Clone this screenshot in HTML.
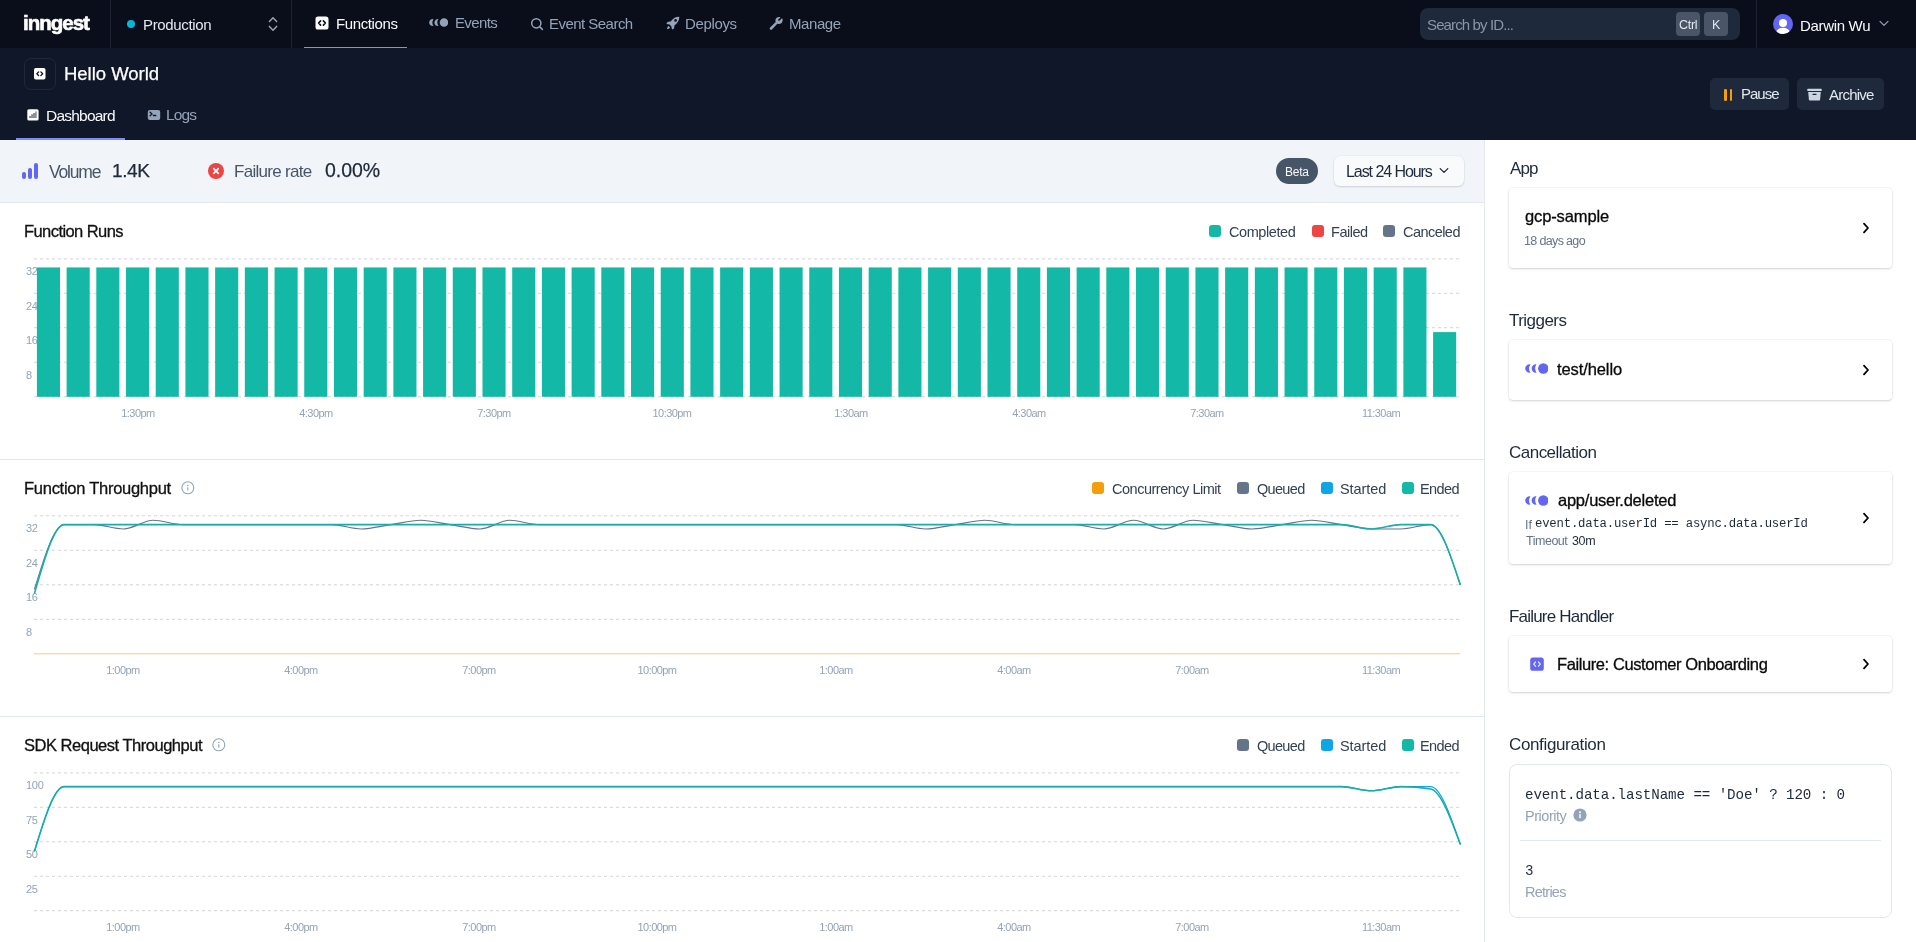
<!DOCTYPE html>
<html><head><meta charset="utf-8"><style>
*{box-sizing:border-box;margin:0;padding:0}
html,body{width:1916px;height:942px;overflow:hidden;background:#fff;font-family:"Liberation Sans",sans-serif}
.a{position:absolute;white-space:nowrap;line-height:1}
.t{will-change:transform}
</style></head><body>
<div class="a" style="left:0px;top:0px;width:1916px;height:48px;background:#0a0e1a;"></div>
<div class="a" style="left:110px;top:0px;width:1px;height:48px;background:#1c2433;"></div>
<div class="a" style="left:291px;top:0px;width:1px;height:48px;background:#1c2433;"></div>
<div class="a" style="left:1756px;top:0px;width:1px;height:48px;background:#1c2433;"></div>
<div id="logo" class="a t" style="left:23.00px;top:13.00px;font-size:20.5px;color:#fff;font-weight:700;letter-spacing:-1.000px;-webkit-text-stroke:0.6px #fff;">inngest</div>
<div class="a" style="left:127px;top:20px;width:8px;height:8px;background:#06b6d4;border-radius:50%"></div>
<div id="prod" class="a t" style="left:143.10px;top:17.00px;font-size:15px;color:#e2e8f0;font-weight:400;letter-spacing:-0.348px;">Production</div>
<svg class="a" style="left:266px;top:16px" width="14" height="16" viewBox="0 0 14 16"><path d="M3.4 5.5 L7 1.8 L10.6 5.5 M3.4 10.4 L7 14.3 L10.6 10.4" fill="none" stroke="#9ca3af" stroke-width="1.5" stroke-linecap="round" stroke-linejoin="round"/></svg>
<svg class="a" style="left:315px;top:16px" width="14" height="14" viewBox="0 0 14 14"><rect x="0.5" y="0.5" width="13" height="13" rx="2.6" fill="#fff"/><path d="M5.6 4.9 L3.6 7 L5.6 9.1 M8.4 4.9 L10.4 7 L8.4 9.1" fill="none" stroke="#0a0e1a" stroke-width="1.6" stroke-linecap="round" stroke-linejoin="round"/></svg>
<div id="func" class="a t" style="left:335.80px;top:16.00px;font-size:15px;color:#f8fafc;font-weight:400;letter-spacing:-0.394px;">Functions</div>
<div class="a" style="left:304px;top:47px;width:103px;height:2px;background:#818cf8;"></div>
<svg class="a" style="left:428.8px;top:17.5px" width="19.27" height="9.02" viewBox="0 0 19.27 9.02"><g transform="translate(15.006,4.510) scale(0.8200)"><path d="M-12.888,-4.076 A4.200,4.200 0 1 0 -12.888,4.076 A7.460,7.460 0 0 1 -12.888,-4.076 Z" fill="#94a3b8"/><path d="M-6.841,-4.148 A4.200,4.200 0 1 0 -6.841,4.148 A7.460,7.460 0 0 1 -6.841,-4.148 Z" fill="#94a3b8"/><circle cx="0" cy="0" r="5.2" fill="#94a3b8"/></g></svg>
<div id="events" class="a t" style="left:454.80px;top:15.15px;font-size:15px;color:#94a3b8;font-weight:400;letter-spacing:-0.640px;">Events</div>
<svg class="a" style="left:529px;top:16px" width="16" height="16" viewBox="0 0 16 16"><circle cx="7.3" cy="7.3" r="4.6" fill="none" stroke="#94a3b8" stroke-width="1.5"/><path d="M10.6 10.6 L13.4 13.4" stroke="#94a3b8" stroke-width="1.5" stroke-linecap="round"/></svg>
<div id="esearch" class="a t" style="left:549.20px;top:15.65px;font-size:15px;color:#94a3b8;font-weight:400;letter-spacing:-0.533px;">Event Search</div>
<svg class="a" style="left:666px;top:16px" width="14" height="14" viewBox="0 0 14 14"><path d="M13.3 0.7 C9.6 0.6 6.6 2.6 4.6 5.6 L2.2 5.8 C1.8 5.8 1.5 6 1.3 6.3 L0.4 8 L3.6 8.6 L5.4 10.4 L6 13.6 L7.7 12.7 C8 12.5 8.2 12.2 8.2 11.8 L8.4 9.4 C11.4 7.4 13.4 4.4 13.3 0.7 Z M2.6 9.9 C1.6 10.4 1.1 11.9 1 13 C2.1 12.9 3.6 12.4 4.1 11.4 Z" fill="#94a3b8"/><circle cx="9.6" cy="4.4" r="1.3" fill="#0a0e1a"/></svg>
<div id="deploys" class="a t" style="left:684.70px;top:16.35px;font-size:15px;color:#94a3b8;font-weight:400;letter-spacing:-0.351px;">Deploys</div>
<svg class="a" style="left:769px;top:16px" width="14" height="14" viewBox="0 0 14 14"><path d="M12.6 2.6 L10.4 4.8 L9.2 4.8 L9.2 3.6 L11.4 1.4 C9.4 0.5 7 1.6 6.5 3.8 C6.3 4.6 6.4 5.4 6.7 6.1 L1.1 11.5 C0.5 12.1 0.5 13 1.1 13.5 C1.6 14 2.5 14 3 13.4 L8.3 7.8 C10.9 8.9 13.8 7 13.7 4.1 C13.7 3.5 13.5 3 13.3 2.6 Z" fill="#94a3b8"/></svg>
<div id="manage" class="a t" style="left:788.60px;top:15.85px;font-size:15px;color:#94a3b8;font-weight:400;letter-spacing:-0.420px;">Manage</div>
<div class="a" style="left:1420px;top:8px;width:320px;height:32px;background:#1e293b;border-radius:8px"></div>
<div id="search" class="a t" style="left:1427.30px;top:17.05px;font-size:15px;color:#8b95a7;font-weight:400;letter-spacing:-0.874px;">Search by ID...</div>
<div class="a" style="left:1676px;top:12px;width:24px;height:24px;background:#4a5568;border-radius:4px"></div>
<div id="ctrl" class="a t" style="left:1679.00px;top:19.00px;font-size:12.5px;color:#e2e8f0;font-weight:400;letter-spacing:-0.269px;">Ctrl</div>
<div class="a" style="left:1704px;top:12px;width:24px;height:24px;background:#4a5568;border-radius:4px"></div>
<div id="kkey" class="a t" style="left:1711.80px;top:19.00px;font-size:12.5px;color:#e2e8f0;font-weight:400;letter-spacing:0.000px;">K</div>
<svg class="a" style="left:1773px;top:14px" width="20" height="20" viewBox="0 0 20 20"><defs><clipPath id="av"><circle cx="10" cy="10" r="10"/></clipPath></defs><circle cx="10" cy="10" r="10" fill="#6366f1"/><circle cx="10" cy="9.1" r="4" fill="#fff"/><ellipse cx="10" cy="17.6" rx="6.5" ry="3.8" fill="#fff" clip-path="url(#av)"/></svg>
<div id="user" class="a t" style="left:1800.00px;top:17.60px;font-size:15px;color:#f8fafc;font-weight:400;letter-spacing:-0.319px;">Darwin Wu</div>
<svg class="a" style="left:1879px;top:20px" width="10" height="7" viewBox="0 0 10 7"><path d="M1 1.3 L5 5.3 L9 1.3" fill="none" stroke="#94a3b8" stroke-width="1.2" stroke-linecap="round" stroke-linejoin="round"/></svg>
<div class="a" style="left:0px;top:48px;width:1916px;height:92px;background:#0f1729;"></div>
<div class="a" style="left:24px;top:58px;width:32px;height:32px;background:transparent;border:1px solid #1e293b;border-radius:7px"></div>
<svg class="a" style="left:34px;top:68px" width="12" height="12" viewBox="0 0 12 12"><rect x="0" y="0" width="11.5" height="11.5" rx="1.8" fill="#fff"/><path d="M4.6 3.9 L2.9 5.75 L4.6 7.6 M6.9 3.9 L8.6 5.75 L6.9 7.6" fill="none" stroke="#0f1729" stroke-width="1.4" stroke-linecap="round" stroke-linejoin="round"/></svg>
<div id="title" class="a t" style="left:63.80px;top:64.75px;font-size:18.5px;color:#fff;font-weight:400;letter-spacing:-0.020px;-webkit-text-stroke:0.25px currentColor;">Hello World</div>
<svg class="a" style="left:27px;top:109px" width="12" height="12" viewBox="0 0 12 12"><rect x="0.3" y="0.2" width="11.3" height="11.4" rx="1.6" fill="#fff"/><path d="M2.1 9.1 L2.1 6.9 L4.1 6.9 L4.1 5.3 L6.1 5.3 L6.1 3.9 L8.2 3.9 L8.2 2.4 L9.7 2.4 L9.7 9.1 Z" fill="#8a8f9a"/></svg>
<div id="dash" class="a t" style="left:45.80px;top:108.35px;font-size:15.5px;color:#f8fafc;font-weight:400;letter-spacing:-0.775px;">Dashboard</div>
<div class="a" style="left:16px;top:138px;width:109px;height:2px;background:#818cf8;"></div>
<svg class="a" style="left:147px;top:109px" width="14" height="12" viewBox="0 0 14 12"><rect x="0.8" y="1" width="12.4" height="10" rx="2" fill="#94a3b8"/><path d="M3.1 3.2 L5 5 L3.1 6.8 M6.4 6.5 L8.8 6.5" fill="none" stroke="#0f1729" stroke-width="1.3" stroke-linecap="round" stroke-linejoin="round"/></svg>
<div id="logs" class="a t" style="left:166.40px;top:107.20px;font-size:15.5px;color:#94a3b8;font-weight:400;letter-spacing:-0.868px;">Logs</div>
<div class="a" style="left:1710px;top:78px;width:79px;height:32px;background:#1e293b;border-radius:5px"></div>
<div class="a" style="left:1724px;top:89.3px;width:2.6px;height:11.5px;background:#f59e0b;border-radius:1.3px"></div>
<div class="a" style="left:1729.8px;top:89.3px;width:2.6px;height:11.5px;background:#f59e0b;border-radius:1.3px"></div>
<div id="pause" class="a t" style="left:1741.00px;top:86.40px;font-size:15px;color:#e2e8f0;font-weight:400;letter-spacing:-1.000px;">Pause</div>
<div class="a" style="left:1797px;top:78px;width:87px;height:32px;background:#1e293b;border-radius:5px"></div>
<svg class="a" style="left:1807px;top:88px" width="15" height="13" viewBox="0 0 15 13"><rect x="0.3" y="0.8" width="14.4" height="2.2" rx="0.6" fill="#cbd5e1"/><path d="M1.2 3.9 L13.8 3.9 L13.1 11.5 C13 12.2 12.5 12.6 11.9 12.6 L3.1 12.6 C2.5 12.6 2 12.2 1.9 11.5 Z" fill="#cbd5e1"/><rect x="5.4" y="5.8" width="4.2" height="1.2" rx="0.4" fill="#1e293b"/></svg>
<div id="archive" class="a t" style="left:1829.00px;top:86.90px;font-size:15px;color:#e2e8f0;font-weight:400;letter-spacing:-0.765px;">Archive</div>
<div class="a" style="left:0px;top:140px;width:1484px;height:62px;background:#f1f4f9;"></div>
<div class="a" style="left:0px;top:202px;width:1484px;height:1px;background:#e2e8f0;"></div>
<div class="a" style="left:1484px;top:140px;width:1px;height:802px;background:#e2e8f0;"></div>
<div class="a" style="left:22px;top:171.5px;width:3.8px;height:7.5px;background:#6366f1;border-radius:1.9px"></div>
<div class="a" style="left:28.1px;top:167.5px;width:3.8px;height:11.5px;background:#6366f1;border-radius:1.9px"></div>
<div class="a" style="left:34.2px;top:163px;width:3.8px;height:16px;background:#6366f1;border-radius:1.9px"></div>
<div id="vol" class="a t" style="left:48.80px;top:163.50px;font-size:17.5px;color:#475569;font-weight:400;letter-spacing:-1.200px;">Volume</div>
<div id="volv" class="a t" style="left:111.90px;top:160.50px;font-size:19px;color:#1e293b;font-weight:400;letter-spacing:-0.398px;-webkit-text-stroke:0.25px currentColor;">1.4K</div>
<svg class="a" style="left:208px;top:163px" width="16" height="16" viewBox="0 0 16 16"><circle cx="8" cy="8" r="8" fill="#ef4444"/><path d="M5.7 5.7 L10.3 10.3 M10.3 5.7 L5.7 10.3" stroke="#fff" stroke-width="1.7" stroke-linecap="round"/></svg>
<div id="frate" class="a t" style="left:233.50px;top:163.05px;font-size:17px;color:#475569;font-weight:400;letter-spacing:-0.701px;">Failure rate</div>
<div id="fratev" class="a t" style="left:324.50px;top:161.00px;font-size:19.5px;color:#1e293b;font-weight:400;letter-spacing:-0.050px;-webkit-text-stroke:0.25px currentColor;">0.00%</div>
<div class="a" style="left:1276px;top:158px;width:42px;height:26px;background:#475569;border-radius:13px"></div>
<div id="beta" class="a t" style="left:1285.10px;top:165.70px;font-size:12px;color:#f8fafc;font-weight:400;letter-spacing:-0.269px;">Beta</div>
<div class="a" style="left:1334px;top:156px;width:130px;height:30px;background:#f8fafc;border-radius:6px;box-shadow:0 1px 2px rgba(0,0,0,.14),0 0 0 0.5px rgba(0,0,0,.04)"></div>
<div id="range" class="a t" style="left:1346.10px;top:163.90px;font-size:16px;color:#1e293b;font-weight:400;letter-spacing:-1.062px;">Last 24 Hours</div>
<svg class="a" style="left:1439px;top:167px" width="10" height="8" viewBox="0 0 10 8"><path d="M1.2 1.6 L5 5.4 L8.8 1.6" fill="none" stroke="#1e293b" stroke-width="1.3" stroke-linecap="round" stroke-linejoin="round"/></svg>
<div class="a" style="left:0px;top:459px;width:1484px;height:1px;background:#e2e8f0;"></div>
<div class="a" style="left:0px;top:716px;width:1484px;height:1px;background:#e2e8f0;"></div>
<div id="t1" class="a t" style="left:23.80px;top:223.00px;font-size:16.5px;color:#111111;font-weight:400;letter-spacing:-0.576px;-webkit-text-stroke:0.3px currentColor;">Function Runs</div>
<div id="t2" class="a t" style="left:23.80px;top:480.05px;font-size:16.5px;color:#111111;font-weight:400;letter-spacing:-0.266px;-webkit-text-stroke:0.3px currentColor;">Function Throughput</div>
<div id="t3" class="a t" style="left:23.70px;top:736.95px;font-size:16.5px;color:#111111;font-weight:400;letter-spacing:-0.483px;-webkit-text-stroke:0.3px currentColor;">SDK Request Throughput</div>
<svg class="a" style="left:181px;top:481px" width="14" height="14" viewBox="0 0 14 14"><circle cx="6.8" cy="6.8" r="6" fill="none" stroke="#94a3b8" stroke-width="1.1"/><circle cx="6.8" cy="4.5" r="0.75" fill="#94a3b8"/><path d="M6.8 6.3 L6.8 9.6" stroke="#94a3b8" stroke-width="1.1"/></svg>
<svg class="a" style="left:212px;top:738px" width="14" height="14" viewBox="0 0 14 14"><circle cx="6.8" cy="6.8" r="6" fill="none" stroke="#94a3b8" stroke-width="1.1"/><circle cx="6.8" cy="4.5" r="0.75" fill="#94a3b8"/><path d="M6.8 6.3 L6.8 9.6" stroke="#94a3b8" stroke-width="1.1"/></svg>
<svg class="a" style="left:0;top:0;will-change:transform;font-family:'Liberation Sans',sans-serif" width="1484" height="942" viewBox="0 0 1484 942"><line x1="34" y1="258.90" x2="1460" y2="258.90" stroke="#d4d4d4" stroke-dasharray="3 3"/><line x1="34" y1="293.30" x2="1460" y2="293.30" stroke="#d4d4d4" stroke-dasharray="3 3"/><line x1="34" y1="327.70" x2="1460" y2="327.70" stroke="#d4d4d4" stroke-dasharray="3 3"/><line x1="34" y1="362.20" x2="1460" y2="362.20" stroke="#d4d4d4" stroke-dasharray="3 3"/><line x1="34" y1="396.80" x2="1460" y2="396.80" stroke="#d4d4d4" stroke-dasharray="3 3"/><text x="26" y="275" font-size="11" fill="#94a3b8" letter-spacing="-0.3">32</text><text x="26" y="310" font-size="11" fill="#94a3b8" letter-spacing="-0.3">24</text><text x="26" y="344" font-size="11" fill="#94a3b8" letter-spacing="-0.3">16</text><text x="26" y="379" font-size="11" fill="#94a3b8" letter-spacing="-0.3">8</text><rect x="36.90" y="267.43" width="23.1" height="129.38" fill="#14b8a6"/><rect x="66.61" y="267.43" width="23.1" height="129.38" fill="#14b8a6"/><rect x="96.31" y="267.43" width="23.1" height="129.38" fill="#14b8a6"/><rect x="126.02" y="267.43" width="23.1" height="129.38" fill="#14b8a6"/><rect x="155.72" y="267.43" width="23.1" height="129.38" fill="#14b8a6"/><rect x="185.43" y="267.43" width="23.1" height="129.38" fill="#14b8a6"/><rect x="215.14" y="267.43" width="23.1" height="129.38" fill="#14b8a6"/><rect x="244.84" y="267.43" width="23.1" height="129.38" fill="#14b8a6"/><rect x="274.55" y="267.43" width="23.1" height="129.38" fill="#14b8a6"/><rect x="304.25" y="267.43" width="23.1" height="129.38" fill="#14b8a6"/><rect x="333.96" y="267.43" width="23.1" height="129.38" fill="#14b8a6"/><rect x="363.67" y="267.43" width="23.1" height="129.38" fill="#14b8a6"/><rect x="393.37" y="267.43" width="23.1" height="129.38" fill="#14b8a6"/><rect x="423.08" y="267.43" width="23.1" height="129.38" fill="#14b8a6"/><rect x="452.78" y="267.43" width="23.1" height="129.38" fill="#14b8a6"/><rect x="482.49" y="267.43" width="23.1" height="129.38" fill="#14b8a6"/><rect x="512.20" y="267.43" width="23.1" height="129.38" fill="#14b8a6"/><rect x="541.90" y="267.43" width="23.1" height="129.38" fill="#14b8a6"/><rect x="571.61" y="267.43" width="23.1" height="129.38" fill="#14b8a6"/><rect x="601.31" y="267.43" width="23.1" height="129.38" fill="#14b8a6"/><rect x="631.02" y="267.43" width="23.1" height="129.38" fill="#14b8a6"/><rect x="660.73" y="267.43" width="23.1" height="129.38" fill="#14b8a6"/><rect x="690.43" y="267.43" width="23.1" height="129.38" fill="#14b8a6"/><rect x="720.14" y="267.43" width="23.1" height="129.38" fill="#14b8a6"/><rect x="749.84" y="267.43" width="23.1" height="129.38" fill="#14b8a6"/><rect x="779.55" y="267.43" width="23.1" height="129.38" fill="#14b8a6"/><rect x="809.26" y="267.43" width="23.1" height="129.38" fill="#14b8a6"/><rect x="838.96" y="267.43" width="23.1" height="129.38" fill="#14b8a6"/><rect x="868.67" y="267.43" width="23.1" height="129.38" fill="#14b8a6"/><rect x="898.37" y="267.43" width="23.1" height="129.38" fill="#14b8a6"/><rect x="928.08" y="267.43" width="23.1" height="129.38" fill="#14b8a6"/><rect x="957.79" y="267.43" width="23.1" height="129.38" fill="#14b8a6"/><rect x="987.49" y="267.43" width="23.1" height="129.38" fill="#14b8a6"/><rect x="1017.20" y="267.43" width="23.1" height="129.38" fill="#14b8a6"/><rect x="1046.90" y="267.43" width="23.1" height="129.38" fill="#14b8a6"/><rect x="1076.61" y="267.43" width="23.1" height="129.38" fill="#14b8a6"/><rect x="1106.32" y="267.43" width="23.1" height="129.38" fill="#14b8a6"/><rect x="1136.02" y="267.43" width="23.1" height="129.38" fill="#14b8a6"/><rect x="1165.73" y="267.43" width="23.1" height="129.38" fill="#14b8a6"/><rect x="1195.43" y="267.43" width="23.1" height="129.38" fill="#14b8a6"/><rect x="1225.14" y="267.43" width="23.1" height="129.38" fill="#14b8a6"/><rect x="1254.85" y="267.43" width="23.1" height="129.38" fill="#14b8a6"/><rect x="1284.55" y="267.43" width="23.1" height="129.38" fill="#14b8a6"/><rect x="1314.26" y="267.43" width="23.1" height="129.38" fill="#14b8a6"/><rect x="1343.96" y="267.43" width="23.1" height="129.38" fill="#14b8a6"/><rect x="1373.67" y="267.43" width="23.1" height="129.38" fill="#14b8a6"/><rect x="1403.38" y="267.43" width="23.1" height="129.38" fill="#14b8a6"/><rect x="1433.08" y="332.11" width="23.1" height="64.69" fill="#14b8a6"/><text x="138" y="417" font-size="11" fill="#94a3b8" text-anchor="middle" letter-spacing="-0.55">1:30pm</text><text x="316" y="417" font-size="11" fill="#94a3b8" text-anchor="middle" letter-spacing="-0.55">4:30pm</text><text x="494" y="417" font-size="11" fill="#94a3b8" text-anchor="middle" letter-spacing="-0.55">7:30pm</text><text x="672" y="417" font-size="11" fill="#94a3b8" text-anchor="middle" letter-spacing="-0.55">10:30pm</text><text x="851" y="417" font-size="11" fill="#94a3b8" text-anchor="middle" letter-spacing="-0.55">1:30am</text><text x="1029" y="417" font-size="11" fill="#94a3b8" text-anchor="middle" letter-spacing="-0.55">4:30am</text><text x="1207" y="417" font-size="11" fill="#94a3b8" text-anchor="middle" letter-spacing="-0.55">7:30am</text><text x="1381" y="417" font-size="11" fill="#94a3b8" text-anchor="middle" letter-spacing="-0.55">11:30am</text><line x1="34" y1="515.80" x2="1460" y2="515.80" stroke="#d4d4d4" stroke-dasharray="3 3"/><line x1="34" y1="550.30" x2="1460" y2="550.30" stroke="#d4d4d4" stroke-dasharray="3 3"/><line x1="34" y1="584.80" x2="1460" y2="584.80" stroke="#d4d4d4" stroke-dasharray="3 3"/><line x1="34" y1="619.30" x2="1460" y2="619.30" stroke="#d4d4d4" stroke-dasharray="3 3"/><line x1="34" y1="653.8" x2="1460" y2="653.8" stroke="#f59e0b" stroke-width="1" opacity="0.55"/><text x="26" y="532" font-size="11" fill="#94a3b8" letter-spacing="-0.3">32</text><text x="26" y="567" font-size="11" fill="#94a3b8" letter-spacing="-0.3">24</text><text x="26" y="601" font-size="11" fill="#94a3b8" letter-spacing="-0.3">16</text><text x="26" y="636" font-size="11" fill="#94a3b8" letter-spacing="-0.3">8</text><path d="M34.40,589.31C44.30,556.97 54.21,524.62 64.11,524.62C74.01,524.62 83.91,524.62 93.82,524.62C103.72,524.62 113.62,528.94 123.52,528.94C133.43,528.94 143.33,520.31 153.23,520.31C163.13,520.31 173.04,524.62 182.94,524.62C192.84,524.62 202.75,524.62 212.65,524.62C222.55,524.62 232.45,524.62 242.36,524.62C252.26,524.62 262.16,524.62 272.06,524.62C281.97,524.62 291.87,524.62 301.77,524.62C311.67,524.62 321.58,524.62 331.48,524.62C341.38,524.62 351.29,528.94 361.19,528.94C371.09,528.94 380.99,526.06 390.90,524.62C400.80,523.19 410.70,520.31 420.60,520.31C430.51,520.31 440.41,523.19 450.31,524.62C460.21,526.06 470.12,528.94 480.02,528.94C489.92,528.94 499.83,520.31 509.73,520.31C519.63,520.31 529.53,524.62 539.44,524.62C549.34,524.62 559.24,524.62 569.14,524.62C579.05,524.62 588.95,524.62 598.85,524.62C608.75,524.62 618.66,524.62 628.56,524.62C638.46,524.62 648.37,524.62 658.27,524.62C668.17,524.62 678.07,524.62 687.98,524.62C697.88,524.62 707.78,524.62 717.68,524.62C727.59,524.62 737.49,524.62 747.39,524.62C757.29,524.62 767.20,524.62 777.10,524.62C787.00,524.62 796.91,524.62 806.81,524.62C816.71,524.62 826.61,524.62 836.52,524.62C846.42,524.62 856.32,524.62 866.22,524.62C876.13,524.62 886.03,524.62 895.93,524.62C905.83,524.62 915.74,528.94 925.64,528.94C935.54,528.94 945.45,526.06 955.35,524.62C965.25,523.19 975.15,520.31 985.06,520.31C994.96,520.31 1004.86,524.62 1014.76,524.62C1024.67,524.62 1034.57,524.62 1044.47,524.62C1054.37,524.62 1064.28,524.62 1074.18,524.62C1084.08,524.62 1093.99,528.94 1103.89,528.94C1113.79,528.94 1123.69,520.31 1133.60,520.31C1143.50,520.31 1153.40,528.94 1163.30,528.94C1173.21,528.94 1183.11,520.31 1193.01,520.31C1202.91,520.31 1212.82,523.19 1222.72,524.62C1232.62,526.06 1242.53,528.94 1252.43,528.94C1262.33,528.94 1272.23,526.06 1282.14,524.62C1292.04,523.19 1301.94,520.31 1311.84,520.31C1321.75,520.31 1331.65,523.19 1341.55,524.62C1351.45,526.06 1361.36,528.94 1371.26,528.94C1381.16,528.94 1391.07,528.94 1400.97,528.94C1410.87,528.94 1420.77,524.62 1430.68,524.62C1440.58,524.62 1450.48,554.81 1460.38,585.00" fill="none" stroke="#64748b" stroke-width="1.1"/><path d="M34.40,593.62C44.30,559.12 54.21,524.62 64.11,524.62C74.01,524.62 83.91,524.62 93.82,524.62C103.72,524.62 113.62,524.62 123.52,524.62C133.43,524.62 143.33,524.62 153.23,524.62C163.13,524.62 173.04,524.62 182.94,524.62C192.84,524.62 202.75,524.62 212.65,524.62C222.55,524.62 232.45,524.62 242.36,524.62C252.26,524.62 262.16,524.62 272.06,524.62C281.97,524.62 291.87,524.62 301.77,524.62C311.67,524.62 321.58,524.62 331.48,524.62C341.38,524.62 351.29,524.62 361.19,524.62C371.09,524.62 380.99,524.62 390.90,524.62C400.80,524.62 410.70,524.62 420.60,524.62C430.51,524.62 440.41,524.62 450.31,524.62C460.21,524.62 470.12,524.62 480.02,524.62C489.92,524.62 499.83,524.62 509.73,524.62C519.63,524.62 529.53,524.62 539.44,524.62C549.34,524.62 559.24,524.62 569.14,524.62C579.05,524.62 588.95,524.62 598.85,524.62C608.75,524.62 618.66,524.62 628.56,524.62C638.46,524.62 648.37,524.62 658.27,524.62C668.17,524.62 678.07,524.62 687.98,524.62C697.88,524.62 707.78,524.62 717.68,524.62C727.59,524.62 737.49,524.62 747.39,524.62C757.29,524.62 767.20,524.62 777.10,524.62C787.00,524.62 796.91,524.62 806.81,524.62C816.71,524.62 826.61,524.62 836.52,524.62C846.42,524.62 856.32,524.62 866.22,524.62C876.13,524.62 886.03,524.62 895.93,524.62C905.83,524.62 915.74,524.62 925.64,524.62C935.54,524.62 945.45,524.62 955.35,524.62C965.25,524.62 975.15,524.62 985.06,524.62C994.96,524.62 1004.86,524.62 1014.76,524.62C1024.67,524.62 1034.57,524.62 1044.47,524.62C1054.37,524.62 1064.28,524.62 1074.18,524.62C1084.08,524.62 1093.99,524.62 1103.89,524.62C1113.79,524.62 1123.69,524.62 1133.60,524.62C1143.50,524.62 1153.40,524.62 1163.30,524.62C1173.21,524.62 1183.11,524.62 1193.01,524.62C1202.91,524.62 1212.82,524.62 1222.72,524.62C1232.62,524.62 1242.53,524.62 1252.43,524.62C1262.33,524.62 1272.23,524.62 1282.14,524.62C1292.04,524.62 1301.94,524.62 1311.84,524.62C1321.75,524.62 1331.65,524.62 1341.55,524.62C1351.45,524.62 1361.36,528.94 1371.26,528.94C1381.16,528.94 1391.07,524.62 1400.97,524.62C1410.87,524.62 1420.77,524.62 1430.68,524.62C1440.58,524.62 1450.48,554.81 1460.38,585.00" fill="none" stroke="#17adab" stroke-width="1.6"/><text x="123" y="674" font-size="11" fill="#94a3b8" text-anchor="middle" letter-spacing="-0.55">1:00pm</text><text x="301" y="674" font-size="11" fill="#94a3b8" text-anchor="middle" letter-spacing="-0.55">4:00pm</text><text x="479" y="674" font-size="11" fill="#94a3b8" text-anchor="middle" letter-spacing="-0.55">7:00pm</text><text x="657" y="674" font-size="11" fill="#94a3b8" text-anchor="middle" letter-spacing="-0.55">10:00pm</text><text x="836" y="674" font-size="11" fill="#94a3b8" text-anchor="middle" letter-spacing="-0.55">1:00am</text><text x="1014" y="674" font-size="11" fill="#94a3b8" text-anchor="middle" letter-spacing="-0.55">4:00am</text><text x="1192" y="674" font-size="11" fill="#94a3b8" text-anchor="middle" letter-spacing="-0.55">7:00am</text><text x="1381" y="674" font-size="11" fill="#94a3b8" text-anchor="middle" letter-spacing="-0.55">11:30am</text><line x1="34" y1="772.90" x2="1460" y2="772.90" stroke="#d4d4d4" stroke-dasharray="3 3"/><line x1="34" y1="807.30" x2="1460" y2="807.30" stroke="#d4d4d4" stroke-dasharray="3 3"/><line x1="34" y1="841.80" x2="1460" y2="841.80" stroke="#d4d4d4" stroke-dasharray="3 3"/><line x1="34" y1="876.30" x2="1460" y2="876.30" stroke="#d4d4d4" stroke-dasharray="3 3"/><line x1="34" y1="910.70" x2="1460" y2="910.70" stroke="#d4d4d4" stroke-dasharray="3 3"/><text x="26" y="789" font-size="11" fill="#94a3b8" letter-spacing="-0.3">100</text><text x="26" y="824" font-size="11" fill="#94a3b8" letter-spacing="-0.3">75</text><text x="26" y="858" font-size="11" fill="#94a3b8" letter-spacing="-0.3">50</text><text x="26" y="893" font-size="11" fill="#94a3b8" letter-spacing="-0.3">25</text><path d="M34.40,851.40C44.30,819.00 54.21,786.59 64.11,786.59C74.01,786.59 83.91,786.59 93.82,786.59C103.72,786.59 113.62,786.59 123.52,786.59C133.43,786.59 143.33,786.59 153.23,786.59C163.13,786.59 173.04,786.59 182.94,786.59C192.84,786.59 202.75,786.59 212.65,786.59C222.55,786.59 232.45,786.59 242.36,786.59C252.26,786.59 262.16,786.59 272.06,786.59C281.97,786.59 291.87,786.59 301.77,786.59C311.67,786.59 321.58,786.59 331.48,786.59C341.38,786.59 351.29,786.59 361.19,786.59C371.09,786.59 380.99,786.59 390.90,786.59C400.80,786.59 410.70,786.59 420.60,786.59C430.51,786.59 440.41,786.59 450.31,786.59C460.21,786.59 470.12,786.59 480.02,786.59C489.92,786.59 499.83,786.59 509.73,786.59C519.63,786.59 529.53,786.59 539.44,786.59C549.34,786.59 559.24,786.59 569.14,786.59C579.05,786.59 588.95,786.59 598.85,786.59C608.75,786.59 618.66,786.59 628.56,786.59C638.46,786.59 648.37,786.59 658.27,786.59C668.17,786.59 678.07,786.59 687.98,786.59C697.88,786.59 707.78,786.59 717.68,786.59C727.59,786.59 737.49,786.59 747.39,786.59C757.29,786.59 767.20,786.59 777.10,786.59C787.00,786.59 796.91,786.59 806.81,786.59C816.71,786.59 826.61,786.59 836.52,786.59C846.42,786.59 856.32,786.59 866.22,786.59C876.13,786.59 886.03,786.59 895.93,786.59C905.83,786.59 915.74,786.59 925.64,786.59C935.54,786.59 945.45,786.59 955.35,786.59C965.25,786.59 975.15,786.59 985.06,786.59C994.96,786.59 1004.86,786.59 1014.76,786.59C1024.67,786.59 1034.57,786.59 1044.47,786.59C1054.37,786.59 1064.28,786.59 1074.18,786.59C1084.08,786.59 1093.99,786.59 1103.89,786.59C1113.79,786.59 1123.69,786.59 1133.60,786.59C1143.50,786.59 1153.40,786.59 1163.30,786.59C1173.21,786.59 1183.11,786.59 1193.01,786.59C1202.91,786.59 1212.82,786.59 1222.72,786.59C1232.62,786.59 1242.53,786.59 1252.43,786.59C1262.33,786.59 1272.23,786.59 1282.14,786.59C1292.04,786.59 1301.94,786.59 1311.84,786.59C1321.75,786.59 1331.65,786.59 1341.55,786.59C1351.45,786.59 1361.36,790.73 1371.26,790.73C1381.16,790.73 1391.07,786.59 1400.97,786.59C1410.87,786.59 1420.77,786.59 1430.68,786.59C1440.58,786.59 1450.48,815.55 1460.38,844.51" fill="none" stroke="#0ea5e9" stroke-width="1.1"/><path d="M34.40,851.40C44.30,819.00 54.21,786.59 64.11,786.59C74.01,786.59 83.91,786.59 93.82,786.59C103.72,786.59 113.62,786.59 123.52,786.59C133.43,786.59 143.33,786.59 153.23,786.59C163.13,786.59 173.04,786.59 182.94,786.59C192.84,786.59 202.75,786.59 212.65,786.59C222.55,786.59 232.45,786.59 242.36,786.59C252.26,786.59 262.16,786.59 272.06,786.59C281.97,786.59 291.87,786.59 301.77,786.59C311.67,786.59 321.58,786.59 331.48,786.59C341.38,786.59 351.29,786.59 361.19,786.59C371.09,786.59 380.99,786.59 390.90,786.59C400.80,786.59 410.70,786.59 420.60,786.59C430.51,786.59 440.41,786.59 450.31,786.59C460.21,786.59 470.12,786.59 480.02,786.59C489.92,786.59 499.83,786.59 509.73,786.59C519.63,786.59 529.53,786.59 539.44,786.59C549.34,786.59 559.24,786.59 569.14,786.59C579.05,786.59 588.95,786.59 598.85,786.59C608.75,786.59 618.66,786.59 628.56,786.59C638.46,786.59 648.37,786.59 658.27,786.59C668.17,786.59 678.07,786.59 687.98,786.59C697.88,786.59 707.78,786.59 717.68,786.59C727.59,786.59 737.49,786.59 747.39,786.59C757.29,786.59 767.20,786.59 777.10,786.59C787.00,786.59 796.91,786.59 806.81,786.59C816.71,786.59 826.61,786.59 836.52,786.59C846.42,786.59 856.32,786.59 866.22,786.59C876.13,786.59 886.03,786.59 895.93,786.59C905.83,786.59 915.74,786.59 925.64,786.59C935.54,786.59 945.45,786.59 955.35,786.59C965.25,786.59 975.15,786.59 985.06,786.59C994.96,786.59 1004.86,786.59 1014.76,786.59C1024.67,786.59 1034.57,786.59 1044.47,786.59C1054.37,786.59 1064.28,786.59 1074.18,786.59C1084.08,786.59 1093.99,786.59 1103.89,786.59C1113.79,786.59 1123.69,786.59 1133.60,786.59C1143.50,786.59 1153.40,786.59 1163.30,786.59C1173.21,786.59 1183.11,786.59 1193.01,786.59C1202.91,786.59 1212.82,786.59 1222.72,786.59C1232.62,786.59 1242.53,786.59 1252.43,786.59C1262.33,786.59 1272.23,786.59 1282.14,786.59C1292.04,786.59 1301.94,786.59 1311.84,786.59C1321.75,786.59 1331.65,786.59 1341.55,786.59C1351.45,786.59 1361.36,790.73 1371.26,790.73C1381.16,790.73 1391.07,786.59 1400.97,786.59C1410.87,786.59 1420.77,787.37 1430.68,788.93C1440.58,790.50 1450.48,817.50 1460.38,844.51" fill="none" stroke="#17adab" stroke-width="1.6"/><text x="123" y="931" font-size="11" fill="#94a3b8" text-anchor="middle" letter-spacing="-0.55">1:00pm</text><text x="301" y="931" font-size="11" fill="#94a3b8" text-anchor="middle" letter-spacing="-0.55">4:00pm</text><text x="479" y="931" font-size="11" fill="#94a3b8" text-anchor="middle" letter-spacing="-0.55">7:00pm</text><text x="657" y="931" font-size="11" fill="#94a3b8" text-anchor="middle" letter-spacing="-0.55">10:00pm</text><text x="836" y="931" font-size="11" fill="#94a3b8" text-anchor="middle" letter-spacing="-0.55">1:00am</text><text x="1014" y="931" font-size="11" fill="#94a3b8" text-anchor="middle" letter-spacing="-0.55">4:00am</text><text x="1192" y="931" font-size="11" fill="#94a3b8" text-anchor="middle" letter-spacing="-0.55">7:00am</text><text x="1381" y="931" font-size="11" fill="#94a3b8" text-anchor="middle" letter-spacing="-0.55">11:30am</text></svg>
<div class="a" style="left:1209.2px;top:225px;width:11.799999999999955px;height:12px;background:#14b8a6;border-radius:3px"></div>
<div id="lg_c" class="a t" style="left:1229.20px;top:225.00px;font-size:14.5px;color:#334155;font-weight:400;letter-spacing:-0.425px;">Completed</div>
<div class="a" style="left:1312px;top:225px;width:12px;height:12px;background:#ef4444;border-radius:3px"></div>
<div id="lg_f" class="a t" style="left:1331.20px;top:225.30px;font-size:14.5px;color:#334155;font-weight:400;letter-spacing:-0.480px;">Failed</div>
<div class="a" style="left:1383px;top:225px;width:12px;height:12px;background:#64748b;border-radius:3px"></div>
<div id="lg_x" class="a t" style="left:1402.80px;top:225.30px;font-size:14.5px;color:#334155;font-weight:400;letter-spacing:-0.545px;">Canceled</div>
<div class="a" style="left:1092px;top:482px;width:12px;height:12px;background:#f59e0b;border-radius:3px"></div>
<div id="lg_cl" class="a t" style="left:1112.40px;top:482.00px;font-size:14.5px;color:#334155;font-weight:400;letter-spacing:-0.483px;">Concurrency Limit</div>
<div class="a" style="left:1237px;top:482px;width:12px;height:12px;background:#64748b;border-radius:3px"></div>
<div id="lg_q2" class="a t" style="left:1256.80px;top:482.00px;font-size:14.5px;color:#334155;font-weight:400;letter-spacing:-0.680px;">Queued</div>
<div class="a" style="left:1321px;top:482px;width:12px;height:12px;background:#0ea5e9;border-radius:3px"></div>
<div id="lg_s2" class="a t" style="left:1339.80px;top:481.65px;font-size:14.5px;color:#334155;font-weight:400;letter-spacing:-0.068px;">Started</div>
<div class="a" style="left:1402px;top:482px;width:12px;height:12px;background:#14b8a6;border-radius:3px"></div>
<div id="lg_e2" class="a t" style="left:1420.00px;top:481.65px;font-size:14.5px;color:#334155;font-weight:400;letter-spacing:-0.600px;">Ended</div>
<div class="a" style="left:1237px;top:739px;width:12px;height:12px;background:#64748b;border-radius:3px"></div>
<div id="lg_q3" class="a t" style="left:1256.80px;top:739.00px;font-size:14.5px;color:#334155;font-weight:400;letter-spacing:-0.680px;">Queued</div>
<div class="a" style="left:1321px;top:739px;width:12px;height:12px;background:#0ea5e9;border-radius:3px"></div>
<div id="lg_s3" class="a t" style="left:1339.80px;top:738.65px;font-size:14.5px;color:#334155;font-weight:400;letter-spacing:-0.068px;">Started</div>
<div class="a" style="left:1402px;top:739px;width:12px;height:12px;background:#14b8a6;border-radius:3px"></div>
<div id="lg_e3" class="a t" style="left:1420.00px;top:738.65px;font-size:14.5px;color:#334155;font-weight:400;letter-spacing:-0.600px;">Ended</div>
<div id="s_app" class="a t" style="left:1509.80px;top:160.30px;font-size:17px;color:#1e293b;font-weight:400;letter-spacing:-0.850px;">App</div>
<div class="a" style="left:1509px;top:188px;width:383px;height:80px;background:#fff;border-radius:4px;box-shadow:0 1px 3px rgba(0,0,0,.12),0 1px 2px -1px rgba(0,0,0,.12),0 0 0 0.5px rgba(0,0,0,.05)"></div>
<div id="s_gcp" class="a t" style="left:1525.00px;top:208.05px;font-size:16.5px;color:#0a0a0a;font-weight:400;letter-spacing:-0.126px;-webkit-text-stroke:0.3px currentColor;">gcp-sample</div>
<div id="s_ago" class="a t" style="left:1524.00px;top:235.40px;font-size:12.5px;color:#64748b;font-weight:400;letter-spacing:-0.650px;">18 days ago</div>
<svg class="a" style="left:1861px;top:222px" width="10" height="12" viewBox="0 0 10 12"><path d="M3 1.7 L7 6 L3 10.3" fill="none" stroke="#000" stroke-width="1.8" stroke-linecap="round" stroke-linejoin="round"/></svg>
<div id="s_trig" class="a t" style="left:1509.20px;top:311.75px;font-size:17px;color:#1e293b;font-weight:400;letter-spacing:-0.545px;">Triggers</div>
<div class="a" style="left:1509px;top:340px;width:383px;height:60px;background:#fff;border-radius:4px;box-shadow:0 1px 3px rgba(0,0,0,.12),0 1px 2px -1px rgba(0,0,0,.12),0 0 0 0.5px rgba(0,0,0,.05)"></div>
<svg class="a" style="left:1524.7px;top:362.5px" width="23.50" height="11.00" viewBox="0 0 23.50 11.00"><g transform="translate(18.300,5.500) scale(1.0000)"><path d="M-12.888,-4.076 A4.200,4.200 0 1 0 -12.888,4.076 A7.460,7.460 0 0 1 -12.888,-4.076 Z" fill="#6366f1"/><path d="M-6.841,-4.148 A4.200,4.200 0 1 0 -6.841,4.148 A7.460,7.460 0 0 1 -6.841,-4.148 Z" fill="#6366f1"/><circle cx="0" cy="0" r="5.2" fill="#6366f1"/></g></svg>
<div id="s_th" class="a t" style="left:1557.20px;top:360.95px;font-size:16.5px;color:#0a0a0a;font-weight:400;letter-spacing:-0.096px;-webkit-text-stroke:0.3px currentColor;">test/hello</div>
<svg class="a" style="left:1861px;top:364px" width="10" height="12" viewBox="0 0 10 12"><path d="M3 1.7 L7 6 L3 10.3" fill="none" stroke="#000" stroke-width="1.8" stroke-linecap="round" stroke-linejoin="round"/></svg>
<div id="s_canc" class="a t" style="left:1508.50px;top:443.90px;font-size:17px;color:#1e293b;font-weight:400;letter-spacing:-0.519px;">Cancellation</div>
<div class="a" style="left:1509px;top:472px;width:383px;height:92px;background:#fff;border-radius:4px;box-shadow:0 1px 3px rgba(0,0,0,.12),0 1px 2px -1px rgba(0,0,0,.12),0 0 0 0.5px rgba(0,0,0,.05)"></div>
<svg class="a" style="left:1524.7px;top:494.5px" width="23.50" height="11.00" viewBox="0 0 23.50 11.00"><g transform="translate(18.300,5.500) scale(1.0000)"><path d="M-12.888,-4.076 A4.200,4.200 0 1 0 -12.888,4.076 A7.460,7.460 0 0 1 -12.888,-4.076 Z" fill="#6366f1"/><path d="M-6.841,-4.148 A4.200,4.200 0 1 0 -6.841,4.148 A7.460,7.460 0 0 1 -6.841,-4.148 Z" fill="#6366f1"/><circle cx="0" cy="0" r="5.2" fill="#6366f1"/></g></svg>
<div id="s_aud" class="a t" style="left:1557.60px;top:491.70px;font-size:16.5px;color:#0a0a0a;font-weight:400;letter-spacing:-0.245px;-webkit-text-stroke:0.3px currentColor;">app/user.deleted</div>
<div id="s_if" class="a t" style="left:1524.50px;top:519.00px;font-size:12.5px;color:#64748b;font-weight:400;letter-spacing:0.000px;">If</div>
<div id="s_code1" class="a t" style="left:1535.40px;top:518.20px;font-size:12.3px;color:#1e293b;font-weight:400;letter-spacing:-0.203px;font-family:'Liberation Mono',monospace">event.data.userId == async.data.userId</div>
<div id="s_to" class="a t" style="left:1525.50px;top:535.30px;font-size:12.5px;color:#64748b;font-weight:400;letter-spacing:-0.482px;">Timeout</div>
<div id="s_30m" class="a t" style="left:1572.00px;top:535.30px;font-size:12.5px;color:#1e293b;font-weight:400;letter-spacing:-0.350px;">30m</div>
<svg class="a" style="left:1861px;top:512px" width="10" height="12" viewBox="0 0 10 12"><path d="M3 1.7 L7 6 L3 10.3" fill="none" stroke="#000" stroke-width="1.8" stroke-linecap="round" stroke-linejoin="round"/></svg>
<div id="s_fh" class="a t" style="left:1509.10px;top:608.25px;font-size:17px;color:#1e293b;font-weight:400;letter-spacing:-0.796px;">Failure Handler</div>
<div class="a" style="left:1509px;top:636px;width:383px;height:56px;background:#fff;border-radius:4px;box-shadow:0 1px 3px rgba(0,0,0,.12),0 1px 2px -1px rgba(0,0,0,.12),0 0 0 0.5px rgba(0,0,0,.05)"></div>
<svg class="a" style="left:1530px;top:657px" width="14" height="14" viewBox="0 0 14 14"><rect x="0.2" y="0.5" width="13.6" height="13.3" rx="2.6" fill="#6366f1"/><path d="M5.5 5 L3.7 7.1 L5.5 9.2 M8.5 5 L10.3 7.1 L8.5 9.2" fill="none" stroke="#e0e7ff" stroke-width="1.3" stroke-linecap="round" stroke-linejoin="round"/></svg>
<div id="s_fco" class="a t" style="left:1556.80px;top:655.80px;font-size:16.5px;color:#0a0a0a;font-weight:400;letter-spacing:-0.412px;-webkit-text-stroke:0.3px currentColor;">Failure: Customer Onboarding</div>
<svg class="a" style="left:1861px;top:658px" width="10" height="12" viewBox="0 0 10 12"><path d="M3 1.7 L7 6 L3 10.3" fill="none" stroke="#000" stroke-width="1.8" stroke-linecap="round" stroke-linejoin="round"/></svg>
<div id="s_conf" class="a t" style="left:1508.60px;top:736.25px;font-size:17px;color:#1e293b;font-weight:400;letter-spacing:-0.355px;">Configuration</div>
<div class="a" style="left:1509px;top:764px;width:383px;height:154px;background:#fff;border:1px solid #e2e8f0;border-radius:8px"></div>
<div id="s_code2" class="a t" style="left:1525.20px;top:787.65px;font-size:14.2px;color:#1e293b;font-weight:400;letter-spacing:-0.095px;font-family:'Liberation Mono',monospace">event.data.lastName == 'Doe' ? 120 : 0</div>
<div id="s_prio" class="a t" style="left:1525.20px;top:808.75px;font-size:14.5px;color:#94a3b8;font-weight:400;letter-spacing:-0.468px;">Priority</div>
<svg class="a" style="left:1573px;top:808px" width="14" height="14" viewBox="0 0 14 14"><circle cx="7" cy="7" r="6.6" fill="#94a3b8"/><circle cx="7" cy="4.3" r="0.95" fill="#fff"/><rect x="6.3" y="6" width="1.4" height="4.3" rx="0.3" fill="#fff"/></svg>
<div class="a" style="left:1520px;top:840px;width:361px;height:1px;background:#e2e8f0;"></div>
<div id="s_3" class="a t" style="left:1525.20px;top:863.75px;font-size:14.2px;color:#1e293b;font-weight:400;letter-spacing:0.000px;font-family:'Liberation Mono',monospace">3</div>
<div id="s_ret" class="a t" style="left:1525.20px;top:885.25px;font-size:14.5px;color:#94a3b8;font-weight:400;letter-spacing:-0.750px;">Retries</div>
</body></html>
